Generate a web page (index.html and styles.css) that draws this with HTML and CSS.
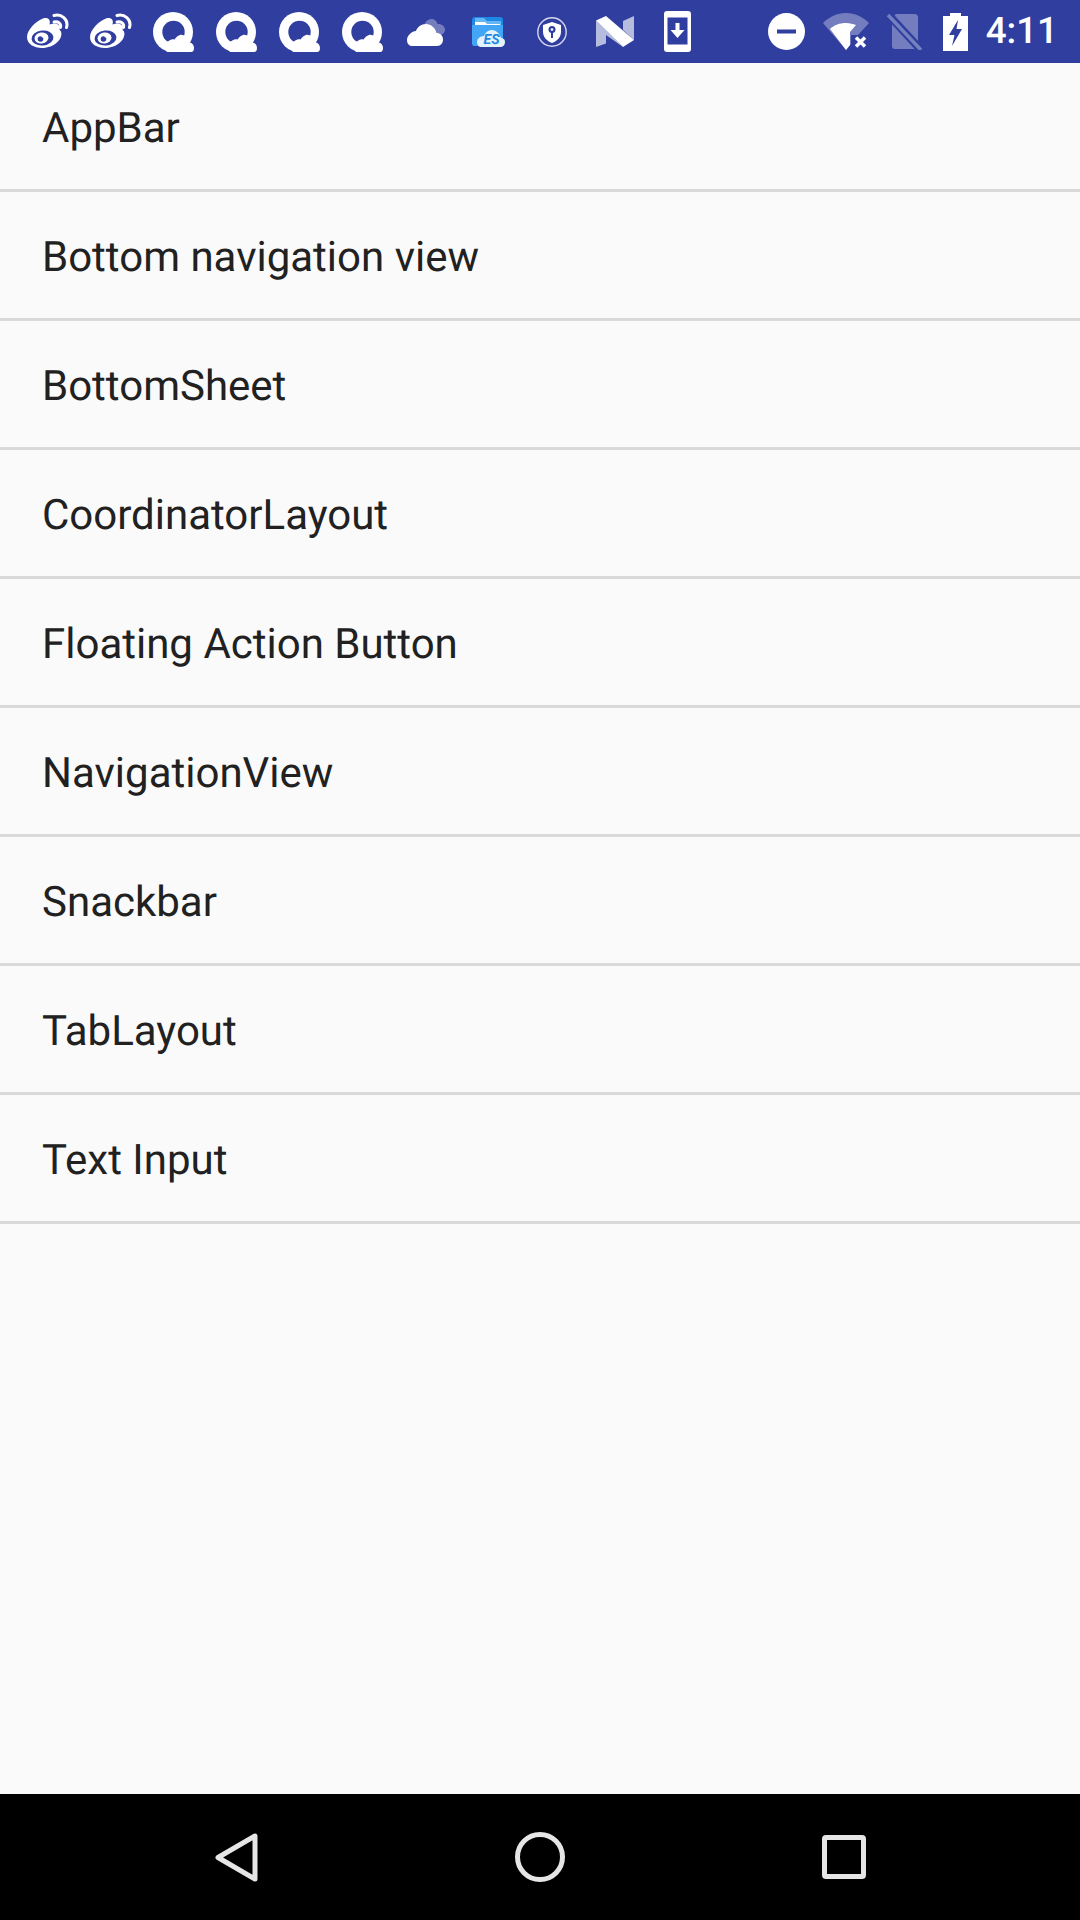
FILE: index.html
```html
<!DOCTYPE html>
<html lang="en">
<head>
<meta charset="utf-8">
<title>Design components</title>
<link rel="stylesheet" href="styles.css">
</head>
<body>
<svg class="defs" aria-hidden="true">
  <symbol id="weibo" viewBox="0 0 42 35">
    <path class="w" d="M0 24C0 17 9 8 16 5.500C21 4 24 7 22.500 11.500C28 9.500 33 10.500 32.500 15.500C32.500 17 33 17.500 34 18.500C36.500 26 27 35 15 35C7 35 0 31 0 24Z"/>
    <ellipse class="b" cx="15.500" cy="25" rx="11" ry="7.500" transform="rotate(-6 15.500 25)"/>
    <ellipse class="w" cx="14.500" cy="25" rx="7" ry="5.500" transform="rotate(-6 14.500 25)"/>
    <circle class="b" cx="13.500" cy="26" r="2.800"/>
    <circle class="w" cx="15.500" cy="23.500" r="1"/>
    <path class="arc" d="M27 2.500C34 .5 42 6 39.500 14.500"/>
    <path class="arc" d="M27 9C31 8 34.500 10.500 33.500 14.500"/>
  </symbol>
  <symbol id="qcloud" viewBox="0 0 41 40">
    <circle class="w" cx="20" cy="20" r="20"/>
    <circle class="b" cx="20.500" cy="20" r="11.200"/>
    <path class="w" d="M14 40H38C40 40 41 38.500 41 36C41 32.500 38.500 30.500 36 30.500C34.500 25.500 30.500 22 27 23C24.500 23.500 23 25.500 21.500 27.500C19 26.500 16.500 28 15 29.500C12 29.500 9 31 9 33Z"/>
  </symbol>
</svg>

<header class="status-bar">
  <div class="notifications">
    <span class="slot"><svg class="i-weibo"><use href="#weibo"/></svg></span>
    <span class="slot"><svg class="i-weibo"><use href="#weibo"/></svg></span>
    <span class="slot"><svg class="i-q"><use href="#qcloud"/></svg></span>
    <span class="slot"><svg class="i-q"><use href="#qcloud"/></svg></span>
    <span class="slot"><svg class="i-q"><use href="#qcloud"/></svg></span>
    <span class="slot"><svg class="i-q"><use href="#qcloud"/></svg></span>
    <span class="slot">
      <svg class="i-cloud" viewBox="0 0 38 28">
        <path class="dim" d="M17 8C18 2 24 0 27 1.500C29 2.500 30 4.500 30.500 6C34 5.500 38 8 38 11.500C38 15 35 17 33 17L26 20Z"/>
        <path class="w" d="M5 28H30C34 28 36 25 36 21.500C36 17.500 33 15 29.500 15C28.500 10 24 6 19 6C14 6 10.500 9 9 13C4 13.500 0 18 0 22C0 25.500 2 28 5 28Z"/>
      </svg>
    </span>
    <span class="slot">
      <svg class="i-es" viewBox="0 0 33 30">
        <rect fill="#1e88e5" x="0" y="0" width="31" height="29" rx="3"/>
        <path fill="#64b5f6" d="M3 1H12L15 4H29V8H3Z"/>
        <path fill="#fff" d="M3 5H13L15 7H28V8H3Z"/>
        <path fill="#42a5f5" d="M0 8H31V26C31 28 30 29 28 29H3C1 29 0 28 0 26Z"/>
        <path fill="#e3f2fd" d="M9 30H28C31 30 33 28 33 25C33 22 31 21 29 21C28 17 24 13 20 13C16 13 13 16 12 19C8 19 5 22 5 25C5 28 7 30 9 30Z"/>
        <text class="es-text" x="11.500" y="27">ES</text>
      </svg>
    </span>
    <span class="slot">
      <svg class="i-shield" viewBox="0 0 30 30">
        <circle class="ring" cx="15" cy="15" r="14.200"/>
        <path class="w" d="M15 5L24 8V15C24 20 20 24 15 26C10 24 6 20 6 15V8Z"/>
        <circle class="b" cx="15" cy="12.500" r="3.500"/>
        <circle class="w" cx="15" cy="12.500" r="1.300"/>
        <rect class="b" x="14" y="15" width="2" height="6"/>
      </svg>
    </span>
    <span class="slot">
      <svg class="i-n" viewBox="0 0 38 31">
        <path class="pale" d="M0 4.500L27 31L10 19V27.500L0 31Z"/>
        <path class="pale" d="M27 5L38 0V24L27 14Z"/>
        <path class="w" d="M0 4.500L10 0L38 24L27 31Z"/>
      </svg>
    </span>
    <span class="slot">
      <svg class="i-phone" viewBox="0 0 27 41">
        <rect class="w" width="27" height="41" rx="3"/>
        <rect class="b" x="3.500" y="6.500" width="20" height="27"/>
        <path class="w" d="M11.500 12H15.500V19H20.500L13.500 27L6.500 19H11.500Z"/>
      </svg>
    </span>
  </div>
  <div class="system">
    <svg class="i-dnd" viewBox="0 0 37 37">
      <circle class="w" cx="18.500" cy="18.500" r="18.500"/>
      <rect class="b" x="9" y="16.500" width="19" height="4"/>
    </svg>
    <svg class="i-wifi" viewBox="0 0 46 37">
      <path class="dim" d="M0 10C6 4 14 0 23 0C32 0 40 4 46 10L35 22H28V31L23 37Z"/>
      <path class="w" d="M7 16C11 12 17 10 23 10C27 10 30 11 33 12L27 19V32L23 37Z"/>
      <path class="x" d="M33 24.500L42 33.500M42 24.500L33 33.500"/>
    </svg>
    <svg class="i-sim" viewBox="0 0 35 37">
      <path class="dim" d="M9 1H27C30 1 31 2 31 5V36H8C6 36 5 35 5 33V5Z"/>
      <path class="gap" d="M-2 -2L33 36"/>
      <path class="slash" d="M1 2L34 37"/>
    </svg>
    <svg class="i-battery" viewBox="2 0 28 38">
      <path class="w" d="M5 3H12V0H23V3H30V38H5Z"/>
      <path class="b" d="M20 7L11 22H16.500L14 33L24 16H18.500Z"/>
    </svg>
    <time class="clock">4:11</time>
  </div>
</header>

<main class="content">
  <ul class="menu">
    <li class="menu-item">AppBar</li>
    <li class="menu-item">Bottom navigation view</li>
    <li class="menu-item">BottomSheet</li>
    <li class="menu-item">CoordinatorLayout</li>
    <li class="menu-item">Floating Action Button</li>
    <li class="menu-item">NavigationView</li>
    <li class="menu-item">Snackbar</li>
    <li class="menu-item">TabLayout</li>
    <li class="menu-item">Text Input</li>
  </ul>
</main>

<nav class="nav-bar">
  <span class="nav-slot">
    <svg class="nav-back" viewBox="0 0 43 49"><path class="nav-stroke" d="M40 3V46L3 24.500Z"/></svg>
  </span>
  <span class="nav-slot">
    <svg class="nav-home" viewBox="0 0 50 50"><circle class="nav-stroke" cx="25" cy="25" r="22.500"/></svg>
  </span>
  <span class="nav-slot">
    <svg class="nav-recent" viewBox="0 0 44 44"><rect class="nav-stroke" x="2.500" y="2.500" width="39" height="39" rx="1.500"/></svg>
  </span>
</nav>
</body>
</html>
```
FILE: styles.css
```css
* { box-sizing: border-box; }

html, body { margin: 0; padding: 0; }

body {
  width: 1080px;
  height: 1920px;
  display: flex;
  flex-direction: column;
  overflow: hidden;
  background: #fafafa;
  font-family: Roboto, "Noto Sans", sans-serif;
  text-rendering: geometricPrecision;
}

.defs { display: block; width: 0; height: 0; position: absolute; }

svg { display: block; flex: none; }

.w { fill: #fff; }
.b { fill: #303f9f; }
.dim { fill: #fff; fill-opacity: .33; }
.pale { fill: #fff; fill-opacity: .65; }

.arc { fill: none; stroke: #fff; stroke-width: 3; stroke-linecap: round; }
.ring { fill: none; stroke: #fff; stroke-opacity: .8; stroke-width: 1.400; }
.x { fill: none; stroke: #fff; stroke-width: 3.500; }
.gap { fill: none; stroke: #303f9f; stroke-width: 8; }
.slash { fill: none; stroke: #7480bf; stroke-width: 3.500; }
.es-text { fill: #1e88e5; font: italic 700 14px Roboto, sans-serif; }

.status-bar {
  flex: none;
  height: 63px;
  display: flex;
  align-items: center;
  justify-content: space-between;
  background: #303f9f;
  color: #fff;
  padding: 0 22px 0 16px;
}

.notifications { display: flex; align-items: center; }
.slot { width: 63px; display: flex; justify-content: center; }

.i-weibo { width: 42px; height: 35px; margin-top: -2px; }
.i-q { width: 41px; height: 40px; }
.i-cloud { width: 38px; height: 28px; }
.i-es { width: 33px; height: 30px; margin-top: 1px; }
.i-shield { width: 30px; height: 30px; margin-top: 1px; }
.i-n { width: 38px; height: 31px; }
.i-phone { width: 27px; height: 41px; }

.system { display: flex; align-items: center; gap: 18px; }
.i-dnd { width: 37px; height: 37px; }
.i-wifi { width: 46px; height: 37px; }
.i-sim { width: 35px; height: 37px; }
.i-battery { width: 28px; height: 38px; }

.clock { font-size: 36.750px; font-weight: 500; line-height: 1; }

.content { flex: 1; }

.menu { list-style: none; margin: 0; padding: 0; }

.menu-item {
  height: 129px;
  padding: 5px 0 0 42px;
  display: flex;
  align-items: center;
  border-bottom: 3px solid #d9d9d9;
  font-size: 42px;
  color: #212121;
}

.nav-bar {
  flex: none;
  height: 126px;
  background: #000;
  display: flex;
  align-items: center;
  justify-content: center;
}

.nav-slot { width: 304px; display: flex; justify-content: center; }

.nav-back { width: 43px; height: 49px; }
.nav-home { width: 50px; height: 50px; }
.nav-recent { width: 44px; height: 44px; }

.nav-stroke { fill: none; stroke: #e6e6e6; stroke-width: 5; stroke-linejoin: round; }
```
